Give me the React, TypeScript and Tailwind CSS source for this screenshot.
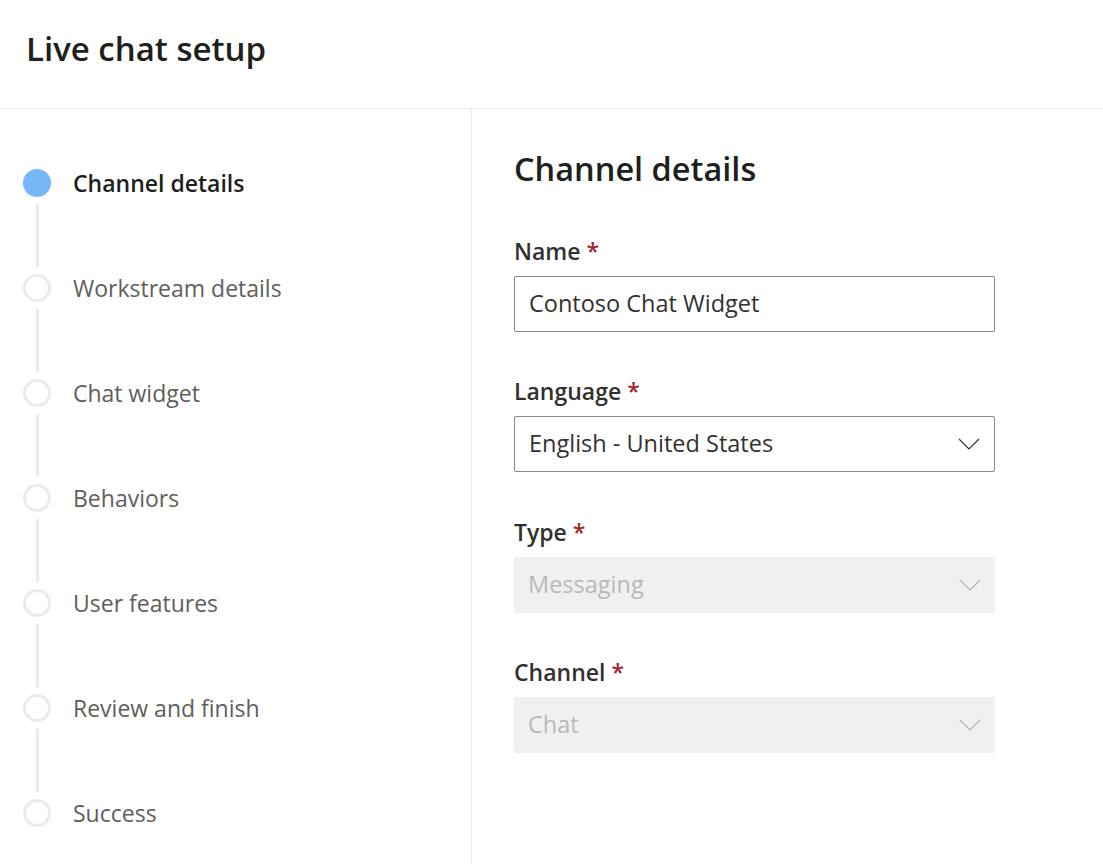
import React from "react";

const steps = [
  "Channel details",
  "Workstream details",
  "Chat widget",
  "Behaviors",
  "User features",
  "Review and finish",
  "Success",
];

function Chevron({ disabled }: { disabled?: boolean }) {
  return (
    <svg width="22" height="12" viewBox="0 0 22 12" fill="none" className="shrink-0">
      <path
        d="M1 1l10 10L21 1"
        stroke={disabled ? "#b3b0ad" : "#323130"}
        strokeWidth="1.2"
      />
    </svg>
  );
}

function Label({ text }: { text: string }) {
  return (
    <div className="text-[23px] font-semibold text-[#323130] leading-[30px] mb-[10px]">
      {text} <span className="text-[#a4262c]">*</span>
    </div>
  );
}

export default function App() {
  return (
    <div className="w-[1103px] h-[864px] bg-white overflow-hidden font-['Open_Sans',sans-serif] text-[#323130]">
      <header className="h-[109px] border-b border-[#edebe9] px-[26px] pb-[10px] flex items-center">
        <h1 className="text-[33px] font-semibold text-[#201f1e]">Live chat setup</h1>
      </header>
      <div className="flex h-[755px]">
        <nav className="w-[472px] border-r border-[#edebe9] pt-[60px] pl-[23px]">
          {steps.map((s, i) => (
            <div key={s} className="flex">
              <div className="flex flex-col items-center w-[28px]">
                {i === 0 ? (
                  <div className="w-[28px] h-[28px] rounded-full bg-[#77b7f7]" />
                ) : (
                  <div className="w-[28px] h-[28px] rounded-full border-[3px] border-[#ebebeb] bg-white" />
                )}
                {i < steps.length - 1 && <div className="w-[3px] h-[63px] bg-[#ebebeb] my-[7px]" />}
              </div>
              <div
                className={
                  "ml-[22px] text-[23px] leading-[28px] " +
                  (i === 0 ? "font-semibold text-[#201f1e]" : "text-[#605e5c]")
                }
              >
                {s}
              </div>
            </div>
          ))}
        </nav>
        <main className="flex-1 pl-[42px] pt-[38px]">
          <h2 className="text-[32.5px] font-semibold text-[#201f1e] leading-[44px] mb-[45px]">
            Channel details
          </h2>
          <div className="w-[481px]">
            <Label text="Name" />
            <div className="h-[56px] border border-[#8a8886] rounded-[2px] px-[14px] flex items-center text-[23.5px] text-[#323130]">
              Contoso Chat Widget
            </div>
            <div className="mt-[44px]">
              <Label text="Language" />
              <div className="h-[56px] border border-[#8a8886] rounded-[2px] pl-[14px] pr-[14px] flex items-center justify-between text-[23.5px] text-[#323130]">
                <span>English - United States</span>
                <Chevron />
              </div>
            </div>
            <div className="mt-[45px]">
              <Label text="Type" />
              <div className="h-[56px] rounded-[2px] bg-[#f0f0f0] pl-[14px] pr-[14px] flex items-center justify-between text-[23.5px] text-[#bab8b7]">
                <span>Messaging</span>
                <Chevron disabled />
              </div>
            </div>
            <div className="mt-[44px]">
              <Label text="Channel" />
              <div className="h-[56px] rounded-[2px] bg-[#f0f0f0] pl-[14px] pr-[14px] flex items-center justify-between text-[23.5px] text-[#bab8b7]">
                <span>Chat</span>
                <Chevron disabled />
              </div>
            </div>
          </div>
        </main>
      </div>
    </div>
  );
}
